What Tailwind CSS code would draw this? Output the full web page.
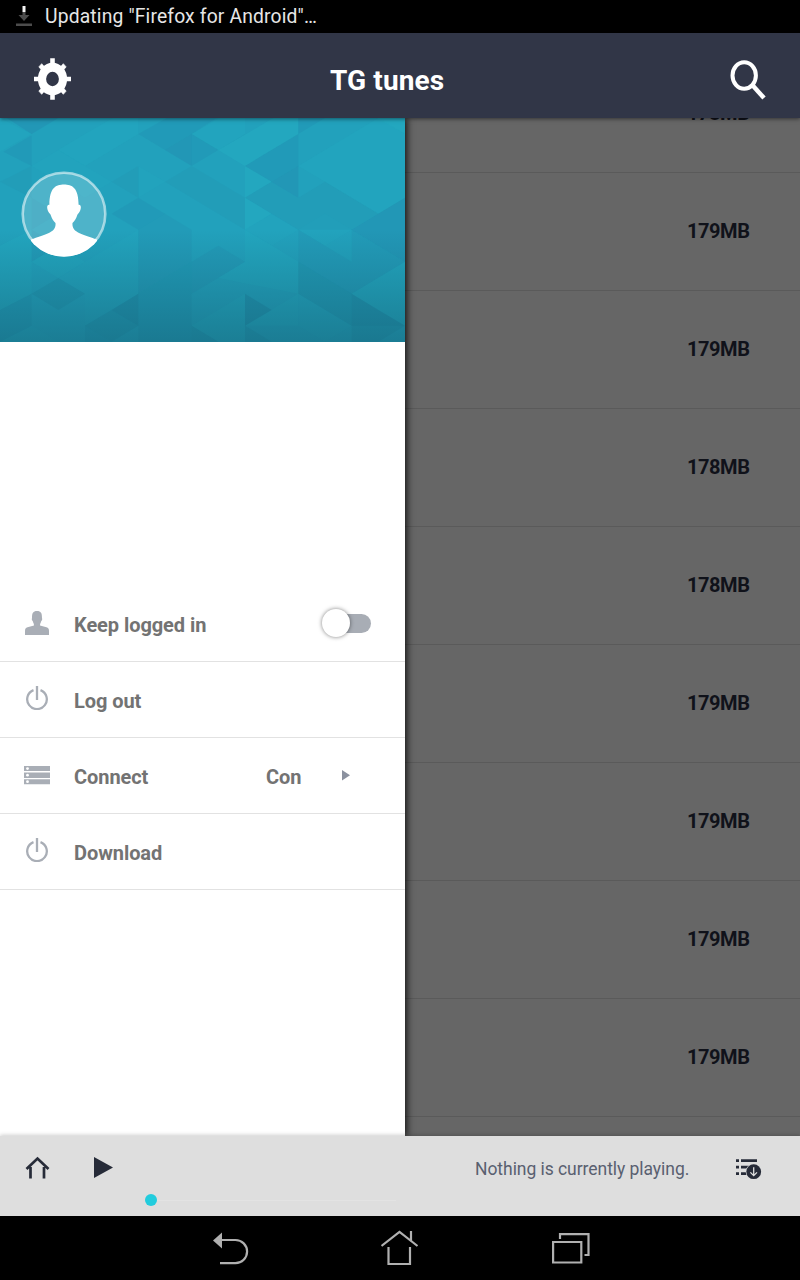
<!DOCTYPE html>
<html lang="en">
<head>
<meta charset="utf-8">
<title>TG tunes</title>
<script src="https://cdn.jsdelivr.net/npm/@tailwindcss/browser@4"></script>
</head>
<body class="w-[800px] h-[1280px] overflow-hidden bg-black font-['Roboto',sans-serif] flex flex-col">
<div class="h-[33px] shrink-0 bg-black flex items-center">
  <svg class="ml-4 w-4 h-[33px]" viewBox="0 0 16 33"><path d="M6.500 12h3v3h4L8 21l-5.500-6h4z" fill="#4c4c4c"/><path d="M6.500 6h3v6h-3z" fill="#f4f4f4"/><path d="M0 23.500h16v2.500H0z" fill="#4c4c4c"/></svg>
  <span class="ml-[13px] mt-[2px] text-[19.300px] tracking-[0.160px] text-[#e6e6e6] whitespace-nowrap">Updating "Firefox for Android"…</span>
</div>
<header class="relative z-20 h-[85px] shrink-0 bg-[#313647] flex items-center shadow-[0_1px_4px_rgba(0,0,0,0.5)]">
  <svg class="ml-[33px] w-[39px] h-[44px] mt-[7px]" viewBox="-19.500 -22 39 44" fill="#fff"><defs><clipPath id="teeth"><path clip-rule="evenodd" d="M-20-20h40v40h-40zM0-9a9 9 0 1 0 0 18a9 9 0 1 0 0-18"/></clipPath></defs><g transform="scale(1 1.120)"><path fill-rule="evenodd" d="M0-14.600a14.600 14.600 0 1 0 0 29.200a14.600 14.600 0 1 0 0-29.200M0-6.400a6.400 6.400 0 1 1 0 12.800a6.400 6.400 0 1 1 0-12.800"/><g clip-path="url(#teeth)"><path d="M-2.300-18.500h4.600v37h-4.600z"/><path d="M-18.500-2h37v4h-37z"/></g><g clip-path="url(#teeth)"><path d="M-13.700-10.800l2.900-2.900l4 4l-2.900 2.900zM13.700-10.800l-2.900-2.900l-4 4l2.900 2.900zM-13.700 10.800l2.900 2.900l4-4l-2.900-2.900zM13.700 10.800l-2.900 2.900l-4-4l2.900-2.900z" stroke="#fff" stroke-width=".6"/></g></g></svg>
  <h1 class="ml-[258px] text-[28px] leading-8 font-bold text-white mt-[11px] tracking-[0.120px]">TG tunes</h1>
  <svg class="ml-auto mr-[32px] w-[40px] h-[42px] mt-[7px]" viewBox="0 0 40 42" fill="none" stroke="#fff"><ellipse cx="16.200" cy="17.500" rx="11.700" ry="13.200" stroke-width="4"/><path d="M24.300 27l11.700 13" stroke-width="4.500"/></svg>
</header>
<main class="relative z-10 h-[1018px] shrink-0 flex overflow-hidden bg-[#666]">
  <aside class="relative z-10 w-[405px] shrink-0 bg-white shadow-[2px_0_7px_rgba(0,0,0,0.8)]">
    <svg class="block w-[405px] h-[224px] bg-[#22a1bc]" viewBox="0 0 405 224">
      <defs><linearGradient id="fade" x1="0" y1="0" x2="0" y2="1"><stop offset=".5" stop-color="#14586c" stop-opacity="0"/><stop offset="1" stop-color="#14586c" stop-opacity=".5"/></linearGradient>
      <clipPath id="face"><circle cx="64" cy="96" r="42.700"/></clipPath></defs>
      <g transform="scale(.33333) translate(0 -24)">
        <g fill="#25afc4">
          <path fill-opacity=".45" d="M655 120L735 74L895 -20V72L735 168zM735 168L815 215L735 263zM735 263L815 311L735 359zM1055 -20L1215 72V24z"/>
          <path fill-opacity=".25" d="M0 24L95 72L0 125zM175 120L255 72L415 -20V72L255 168zM575 72L735 -20V72L655 120zM895 168L1055 72L1215 168V263L1135 311L975 215zM1055 72L1135 24L1215 72V168z"/>
          <path fill-opacity=".14" d="M95 168L175 120L255 168L335 215L255 263L175 215zM415 168L495 215L415 263zM735 359L815 311L895 359L815 407zM895 359L975 311L1055 359L975 407z"/>
          <path fill-opacity=".3" d="M95 455L175 407L255 455L175 504zM655 504L735 455L735 359L895 455V551zM0 407L95 359V551L0 600zM1055 551L1215 455V647zM735 551L655 600L575 647L655 695H735zM735 647L895 551V647z"/>
          <path fill-opacity=".16" d="M175 504L255 455L415 359V551L255 647V551zM0 695L95 647L175 695zM895 551L1055 647L975 695L895 647z"/>
        </g>
        <g fill="#2386ab">
          <path fill-opacity=".36" d="M20 24L95 72L175 24zM495 120L575 72V168zM815 215L895 168V263zM1055 359L1215 263V455z"/>
          <path fill-opacity=".24" d="M10 125L95 76V168zM575 72L655 120L575 168zM735 168L895 72V168L815 215zM415 72L500 24H650L575 72L495 120zM335 311L415 263L495 311L415 359zM895 24V72L975 24z"/>
          <path fill-opacity=".16" d="M335 215L415 168V263zM495 215L575 168V263zM0 215L95 168V263zM575 168L735 263V359L575 263zM895 263L975 215L1135 311L1055 359L895 359L815 311zM735 263L815 215L895 263L815 311z"/>
          <path fill-opacity=".2" d="M415 359L495 311L575 359L655 407L735 455L575 551V455L415 551zM575 359V455L655 407zM575 455L655 504L575 551zM95 263L175 311L95 359zM95 359V455L175 407zM895 359L1055 455V551L895 455zM1055 359L1215 455L1055 551z"/>
        </g>
        <g fill="#176482">
          <path fill-opacity=".22" d="M335 600L415 551V647zM735 551L815 600L735 647zM1055 551L1135 600L1215 647H1055z"/>
          <path fill-opacity=".13" d="M255 647L335 600L415 647L335 695zM735 647L815 695H735zM1055 647H1215L1135 695H1055zM95 551L175 504L255 551L175 600zM575 647L655 695H575zM895 455L1055 551V647L895 551z"/>
          <path fill-opacity=".09" d="M415 551L575 455V695H415zM255 647V695H335zM0 600L95 551V647L0 695z"/>
        </g>
      </g>
      <rect width="405" height="224" fill="url(#fade)"/>
      <circle cx="64" cy="96" r="41.300" fill="#fff" fill-opacity=".2" stroke="#fff" stroke-opacity=".55" stroke-width="2.600"/>
      <path clip-path="url(#face)" fill="#fff" d="M64 66.500C72 66.500 78.500 69.500 78.600 86.700C82 86 81.500 93 77.500 96.500C76 101 74.500 103 72.500 105C71.500 115 83 116 97 121.500V142H31V121.500C45 116 56.500 115 55.500 105C53.500 103 52 101 50.500 96.500C46.500 93 46 86 49.400 86.700C49.500 69.500 56 66.500 64 66.500z"/>
    </svg>
    <nav class="mt-[244px] text-[20px] tracking-[-0.070px] font-bold text-[#737373]">
      <div class="h-[76px] border-b border-[#e2e2e2] flex items-center">
        <svg class="ml-[25px] w-6 h-6 -mt-[2px]" viewBox="0 0 24 24" fill="#a9aeb6"><path d="M12 0c4 0 5 2 5 7c.500 1.500 0 2.500-.800 3.200c-.500 1.800-1.200 2.300-1.200 4.300l6.500 1.700c1.800.5 2.500 1.500 2.500 3.800v4H0v-4c0-2.300.7-3.300 2.500-3.800L9 14.500c0-2-.7-2.500-1.200-4.300C7 9.500 6.500 8.500 7 7c0-5 1-7 5-7z"/></svg>
        <span class="ml-[25px] mt-[3px]">Keep logged in</span>
        <span class="relative ml-auto mr-[34px] -mt-px w-[48px] h-[19px] rounded-full bg-[#a8adb5]"><span class="absolute -left-px top-[-4.500px] size-7 rounded-full bg-white shadow-[0_0_4px_rgba(0,0,0,0.5)]"></span></span>
      </div>
      <div class="h-[76px] border-b border-[#e2e2e2] flex items-center">
        <svg class="ml-[25px] w-6 h-6 -mt-[3px]" viewBox="0 0 24 24" fill="none" stroke="#a9aeb6" stroke-width="2.300"><path d="M8.500 4.100a9.800 9.800 0 1 0 7 0M12 0v14"/></svg>
        <span class="ml-[25px] mt-[3px]">Log out</span>
      </div>
      <div class="h-[76px] border-b border-[#e2e2e2] flex items-center">
        <svg class="ml-[24px] w-[26px] h-[19px] -mt-px" viewBox="0 0 26 19"><path fill="#a9aeb6" d="M0 0h26v5H0zM0 6.500h26v5.500H0zM0 13.200h26v5H0z"/><g fill="#fff"><circle cx="3.500" cy="2.600" r="1.400"/><circle cx="3.500" cy="9.200" r="1.400"/><circle cx="3.500" cy="15.700" r="1.400"/></g></svg>
        <span class="ml-[24px] mt-[3px] w-[192px]">Connect</span><span class="mt-[3px] w-[76px]">Con</span>
        <svg class="w-2 h-[11px] -mt-px" viewBox="0 0 8 11"><path fill="#8b919f" d="M0 0l8 5.300L0 10.600z"/></svg>
      </div>
      <div class="h-[76px] border-b border-[#e2e2e2] flex items-center">
        <svg class="ml-[25px] w-6 h-6 -mt-[3px]" viewBox="0 0 24 24" fill="none" stroke="#a9aeb6" stroke-width="2.300"><path d="M8.500 4.100a9.800 9.800 0 1 0 7 0M12 0v14"/></svg>
        <span class="ml-[25px] mt-[3px]">Download</span>
      </div>
    </nav>
  </aside>
  <section class="flex-1 -mt-[63px] text-[20px] tracking-[-0.450px] font-bold text-[#10121a]">
    <div class="h-[118px] border-b border-[#5a5a5a] pr-[50.500px] pb-[2px] flex items-center justify-end">178MB</div>
    <div class="h-[118px] border-b border-[#5a5a5a] pr-[50.500px] pb-[2px] flex items-center justify-end">179MB</div>
    <div class="h-[118px] border-b border-[#5a5a5a] pr-[50.500px] pb-[2px] flex items-center justify-end">179MB</div>
    <div class="h-[118px] border-b border-[#5a5a5a] pr-[50.500px] pb-[2px] flex items-center justify-end">178MB</div>
    <div class="h-[118px] border-b border-[#5a5a5a] pr-[50.500px] pb-[2px] flex items-center justify-end">178MB</div>
    <div class="h-[118px] border-b border-[#5a5a5a] pr-[50.500px] pb-[2px] flex items-center justify-end">179MB</div>
    <div class="h-[118px] border-b border-[#5a5a5a] pr-[50.500px] pb-[2px] flex items-center justify-end">179MB</div>
    <div class="h-[118px] border-b border-[#5a5a5a] pr-[50.500px] pb-[2px] flex items-center justify-end">179MB</div>
    <div class="h-[118px] border-b border-[#5a5a5a] pr-[50.500px] pb-[2px] flex items-center justify-end">179MB</div>
  </section>
</main>
<footer class="relative z-20 h-[80px] shrink-0 bg-[#dedede] flex items-start shadow-[0_-1px_4px_rgba(0,0,0,0.2)]">
  <svg class="mt-[20px] ml-[25px] w-[25px] h-[23px]" viewBox="0 0 25 23" fill="none" stroke="#262b38" stroke-width="2.700"><path d="M1.500 13L12.500 2.500L23.500 13M5.500 11v11.500M19 11v11.500"/></svg>
  <svg class="mt-[21px] ml-[44px] w-[19px] h-[21px]" viewBox="0 0 19 21"><path d="M0 0l19 10.500L0 21z" fill="#262b38"/></svg>
  <div class="mt-[58px] ml-[32px] w-[251px] h-3 flex items-center"><span class="size-3 rounded-full bg-[#22ccdd]"></span><span class="h-px flex-1 bg-[#e3e3e3]"></span></div>
  <span class="mt-[21px] ml-[79px] w-[261px] text-[17.500px] tracking-[-0.050px] leading-6 text-[#596070] whitespace-nowrap">Nothing is currently playing.</span>
  <svg class="mt-[22px] w-[26px] h-[22px]" viewBox="0 0 26 22"><path fill="#262b38" d="M0 1.300h3v2.700H0zM5 1.300h16v2.700H5zM0 7.800h3v2.700H0zM5 7.800h9v2.700H5zM0 14.300h3V17H0zM5 14.300h7V17H5z"/><circle cx="17.700" cy="13.700" r="8" fill="#dedede"/><circle cx="17.700" cy="13.700" r="7.400" fill="#262b38"/><path d="M17.700 9.200v8.500M14.400 14.400l3.300 3.300l3.300-3.300" fill="none" stroke="#dedede" stroke-width="1.300"/></svg>
</footer>
<div class="h-16 shrink-0 bg-black flex items-start">
  <svg class="mt-[15px] ml-[213px] w-[36px] h-[34px]" viewBox="0 0 36 34" fill="none" stroke="#b0b0b0" stroke-width="2.200"><path d="M9 9h13.500a11.600 11.600 0 0 1 0 23.200H7"/><path d="M0 9.500L9 1.500v16z" fill="#b0b0b0" stroke="none"/></svg>
  <svg class="mt-[13px] ml-[132px] w-[38px] h-[38px]" viewBox="0 0 38 38" fill="none" stroke="#b0b0b0" stroke-width="2.200"><path d="M.500 17L18.500 3l18 14M30 2v10M7.500 18v17h21.500V18"/></svg>
  <svg class="mt-[15px] ml-[133px] w-[38px] h-[34px]" viewBox="0 0 38 34" fill="none" stroke="#b0b0b0" stroke-width="2.200"><path d="M1.100 11h28.200v20.500H1.100zM8 8V3.200h28.500V24H32.500"/></svg>
</div>
</body>
</html>
